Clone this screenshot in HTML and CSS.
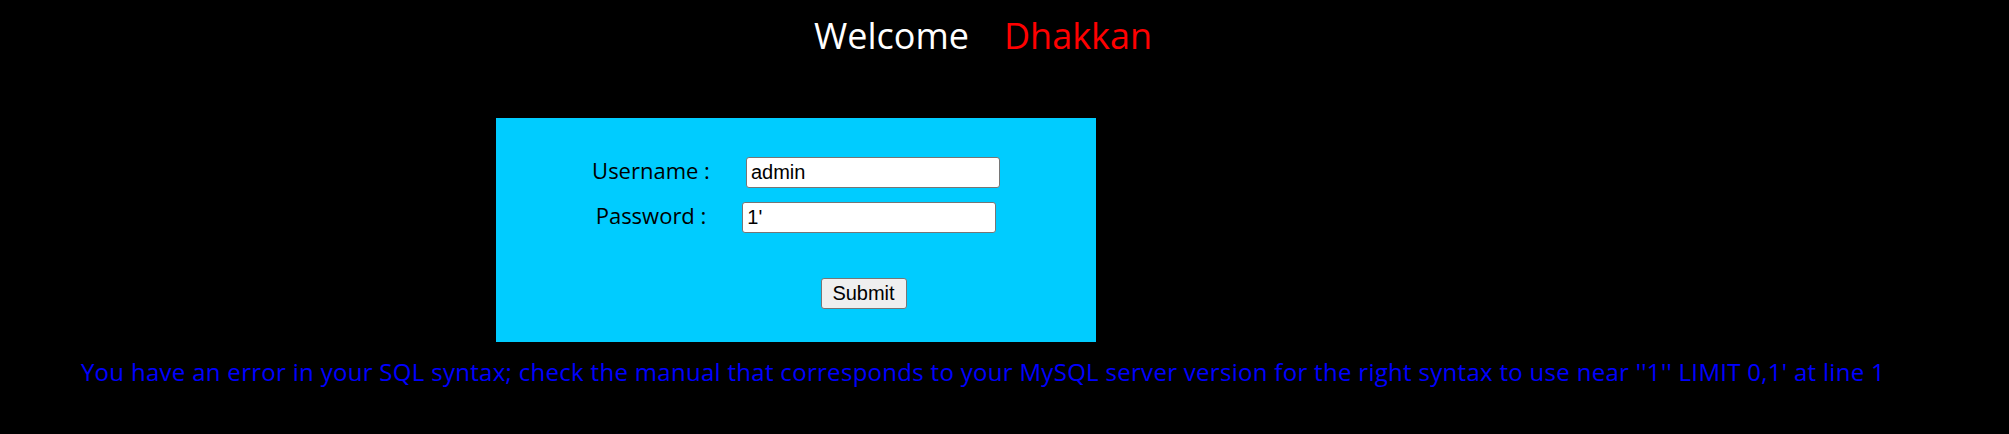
FILE: index.html
```html
<!DOCTYPE html>
<html lang="en">
<head>
    <meta charset="UTF-8">
    <title>Less-11 - Error Based - String</title>
    <link rel="stylesheet" href="styles.css">
</head>
<body>
    <!-- greeting on top -->
    <div class="welcome">Welcome<span class="name">Dhakkan</span></div>

    <!-- the blue login box -->
    <div class="login-box">
        <form class="login-form" name="form1" method="post" action="">
            <div class="row">
                <label for="uname">Username :</label>
                <input type="text" id="uname" name="uname" value="admin">
            </div>
            <div class="row row-pass">
                <label for="passwd">Password :</label>
                <input type="text" id="passwd" name="passwd" value="1'">
            </div>
            <div class="row-submit">
                <input type="submit" name="submit" value="Submit">
            </div>
        </form>
    </div>

    <!-- mysql error output -->
    <div class="error">You have an error in your SQL syntax; check the manual that corresponds to your MySQL server version for the right syntax to use near ''1'' LIMIT 0,1' at line 1</div>
</body>
</html>
```

FILE: styles.css
```css
body {
    margin: 0;
    padding: 0 55px 0 12px;
    background: #000;
    font-family: "Open Sans", "Noto Sans", sans-serif;
}

.welcome {
    padding-top: 16px;
    line-height: 40px;
    font-size: 36px;
    color: #fff;
    text-align: center;
}
.welcome .name {
    margin-left: 35px;
    color: #f00;
}

.login-box {
    width: 600px;
    height: 224px;
    margin: 62px 0 0 484px;
    background: #0cf;
}

.login-form {
    display: flex;
    flex-direction: column;
    align-items: center;
    margin: 0;
    padding-top: 39px;
}
.row {
    display: flex;
    align-items: baseline;
    height: 31px;
}
.row-pass {
    margin-top: 14px;
}
.row label {
    margin-right: 36px;
    font-size: 22px;
    line-height: 20px;
    color: #000;
}
.row input[type="text"] {
    width: 254px;
    height: 31px;
    padding: 1px 4px;
    border: 1px solid #767676;
    border-radius: 3px;
    box-sizing: border-box;   /* keep the 254px outer size */
    background: #fff;
    font-family: "Liberation Sans", Arial, sans-serif;
    font-size: 20px;
    color: #000;
}

.row-submit {
    margin: 45px 0 0 135px;
}
.row-submit input[type="submit"] {
    width: 86px;
    height: 31px;
    padding: 0;
    border: 1px solid #767676;
    border-radius: 3px;
    background: #efefef;
    font-family: "Liberation Sans", Arial, sans-serif;
    font-size: 20px;
    color: #000;
}

.error {
    margin-top: 15px;
    line-height: 30px;
    font-size: 24px;
    letter-spacing: 0.3px;
    color: #00f;
    text-align: center;
}
```
